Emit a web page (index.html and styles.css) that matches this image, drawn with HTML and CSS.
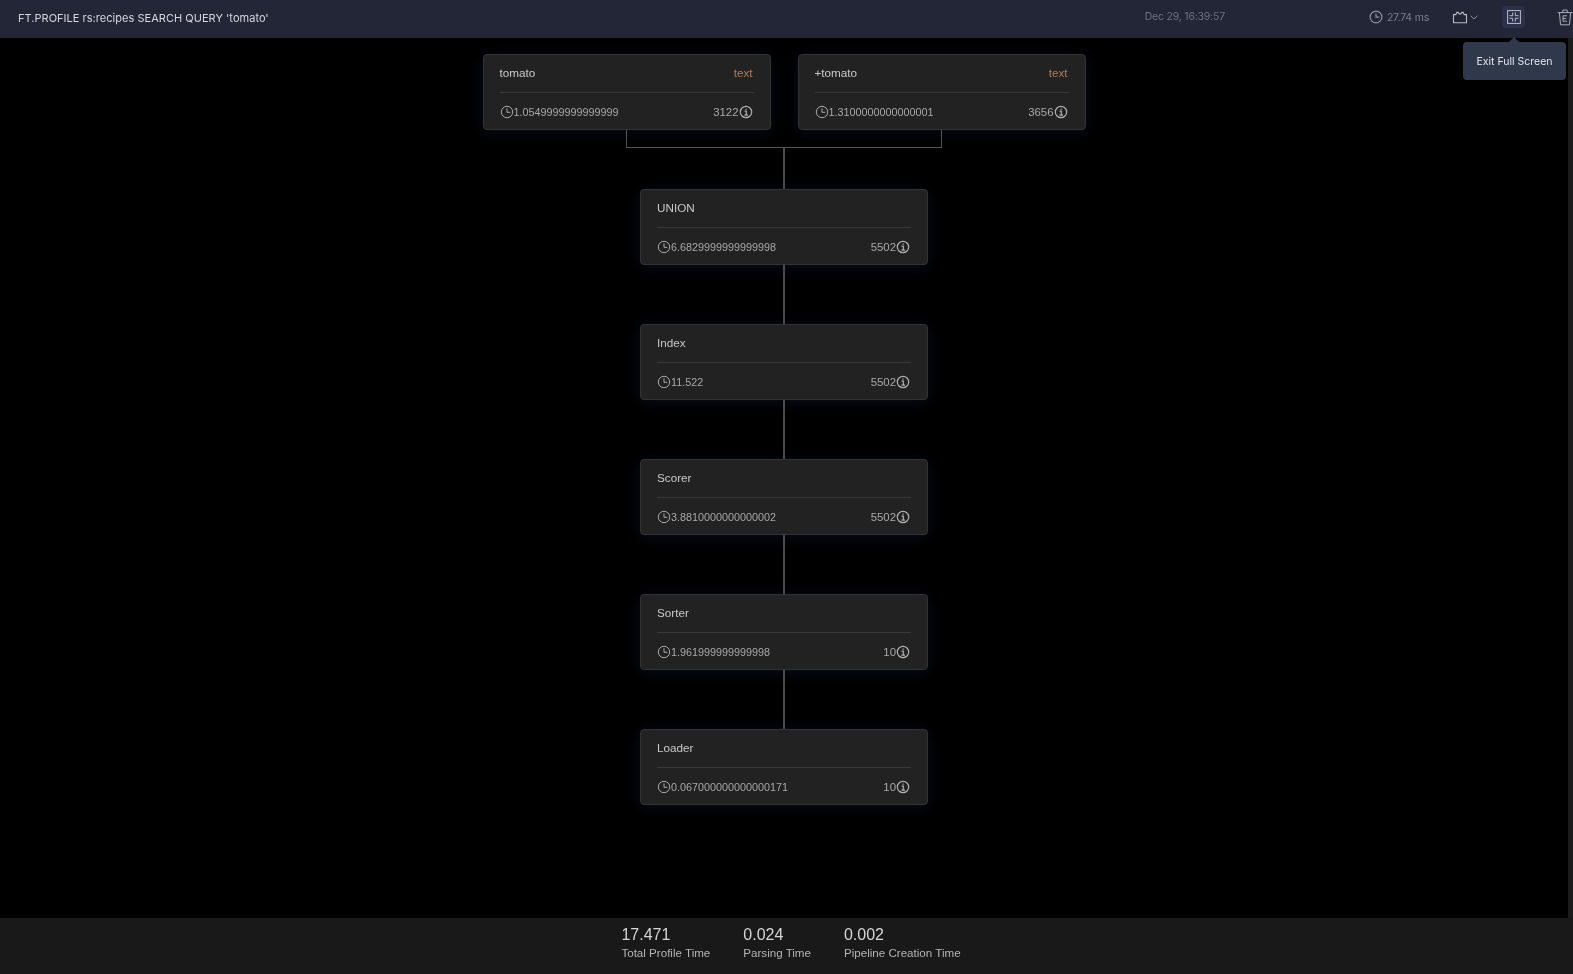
FILE: index.html
```html
<!DOCTYPE html>
<html lang="en">
<head>
<meta charset="utf-8">
<title>FT.PROFILE</title>
<link rel="stylesheet" href="styles.css">
</head>
<body>
<div class="app">
  <header class="topbar">
    <div class="query">FT.PROFILE rs:recipes SEARCH QUERY 'tomato'</div>
    <div class="date">Dec 29, 16:39:57</div>
    <div class="duration">
      <svg class="ico-clock" viewBox="0 0 14 14"><circle cx="7" cy="7" r="5.9"/><path d="M7 3.4V7.2H10.4"/></svg>
      <span>27.74 ms</span>
    </div>
    <div class="view-switch">
      <svg class="ico-view" viewBox="0 0 16 13"><path d="M1.5 3.6H3.8L4.8 1.4H6.2L7 2.9H9L9.8 1.4H11.2L12.2 3.6H14.5V11.8H1.5Z"/></svg>
      <svg class="ico-chev" viewBox="0 0 8 5"><path d="M.7.8 4 4 7.300.8"/></svg>
    </div>
    <div class="icon-btn">
      <svg class="ico-exit" viewBox="0 0 14 14"><rect x=".6" y=".6" width="12.800" height="12.800"/><path d="M5.700 2.500V5.700H2.500M8.300 2.500V5.700H11.500M5.700 11.500V8.300H2.500M8.300 11.500V8.300H11.500"/></svg>
    </div>
    <svg class="ico-trash" viewBox="0 0 16 17"><path d="M.6 3.600H15.400M5.500 3.600 6 1H10L10.500 3.600M2.400 3.600 3.500 15.800H12.500L13.600 3.600M6 6.800H10M6 9.500H9M6 12.200H10M6 6.800V12.200"/></svg>
  </header>

  <div class="tooltip">Exit Full Screen</div>

  <div class="workspace">
    <main class="tree">
      <div class="pair">
        <article class="node">
          <div class="node-head"><span>tomato</span><span class="tag">text</span></div>
          <div class="node-meta">
            <span class="meta-time"><svg class="ico-time" viewBox="0 0 14 14"><circle cx="7" cy="7" r="5.700"/><path d="M7 3.300V7.300H10.300"/></svg>1.0549999999999999</span>
            <span class="meta-count">3122<svg class="ico-info" viewBox="0 0 14 14"><circle cx="7" cy="7" r="5.700"/><path d="M5.600 6.100H7.300V10.200M5.400 10.200H9M7.100 3.600V4.800"/></svg></span>
          </div>
        </article>
        <article class="node">
          <div class="node-head"><span>+tomato</span><span class="tag">text</span></div>
          <div class="node-meta">
            <span class="meta-time"><svg class="ico-time" viewBox="0 0 14 14"><circle cx="7" cy="7" r="5.700"/><path d="M7 3.300V7.300H10.300"/></svg>1.3100000000000001</span>
            <span class="meta-count">3656<svg class="ico-info" viewBox="0 0 14 14"><circle cx="7" cy="7" r="5.700"/><path d="M5.600 6.100H7.300V10.200M5.400 10.200H9M7.100 3.600V4.800"/></svg></span>
          </div>
        </article>
      </div>
      <div class="bracket"></div>
      <div class="stem stem-top"></div>

      <article class="node">
        <div class="node-head"><span>UNION</span></div>
        <div class="node-meta">
          <span class="meta-time"><svg class="ico-time" viewBox="0 0 14 14"><circle cx="7" cy="7" r="5.700"/><path d="M7 3.300V7.300H10.300"/></svg>6.6829999999999998</span>
          <span class="meta-count">5502<svg class="ico-info" viewBox="0 0 14 14"><circle cx="7" cy="7" r="5.700"/><path d="M5.600 6.100H7.300V10.200M5.400 10.200H9M7.100 3.600V4.800"/></svg></span>
        </div>
      </article>
      <div class="stem"></div>

      <article class="node">
        <div class="node-head"><span>Index</span></div>
        <div class="node-meta">
          <span class="meta-time"><svg class="ico-time" viewBox="0 0 14 14"><circle cx="7" cy="7" r="5.700"/><path d="M7 3.300V7.300H10.300"/></svg>11.522</span>
          <span class="meta-count">5502<svg class="ico-info" viewBox="0 0 14 14"><circle cx="7" cy="7" r="5.700"/><path d="M5.600 6.100H7.300V10.200M5.400 10.200H9M7.100 3.600V4.800"/></svg></span>
        </div>
      </article>
      <div class="stem"></div>

      <article class="node">
        <div class="node-head"><span>Scorer</span></div>
        <div class="node-meta">
          <span class="meta-time"><svg class="ico-time" viewBox="0 0 14 14"><circle cx="7" cy="7" r="5.700"/><path d="M7 3.300V7.300H10.300"/></svg>3.8810000000000002</span>
          <span class="meta-count">5502<svg class="ico-info" viewBox="0 0 14 14"><circle cx="7" cy="7" r="5.700"/><path d="M5.600 6.100H7.300V10.200M5.400 10.200H9M7.100 3.600V4.800"/></svg></span>
        </div>
      </article>
      <div class="stem"></div>

      <article class="node">
        <div class="node-head"><span>Sorter</span></div>
        <div class="node-meta">
          <span class="meta-time"><svg class="ico-time" viewBox="0 0 14 14"><circle cx="7" cy="7" r="5.700"/><path d="M7 3.300V7.300H10.300"/></svg>1.961999999999998</span>
          <span class="meta-count">10<svg class="ico-info" viewBox="0 0 14 14"><circle cx="7" cy="7" r="5.700"/><path d="M5.600 6.100H7.300V10.200M5.400 10.200H9M7.100 3.600V4.800"/></svg></span>
        </div>
      </article>
      <div class="stem"></div>

      <article class="node">
        <div class="node-head"><span>Loader</span></div>
        <div class="node-meta">
          <span class="meta-time"><svg class="ico-time" viewBox="0 0 14 14"><circle cx="7" cy="7" r="5.700"/><path d="M7 3.300V7.300H10.300"/></svg>0.067000000000000171</span>
          <span class="meta-count">10<svg class="ico-info" viewBox="0 0 14 14"><circle cx="7" cy="7" r="5.700"/><path d="M5.600 6.100H7.300V10.200M5.400 10.200H9M7.100 3.600V4.800"/></svg></span>
        </div>
      </article>
    </main>
    <div class="scrollbar"></div>
  </div>

  <footer class="summary">
    <div class="stat"><div class="stat-value">17.471</div><div class="stat-label">Total Profile Time</div></div>
    <div class="stat"><div class="stat-value">0.024</div><div class="stat-label">Parsing Time</div></div>
    <div class="stat"><div class="stat-value">0.002</div><div class="stat-label">Pipeline Creation Time</div></div>
  </footer>
</div>
</body>
</html>
```
FILE: styles.css
```css
* { box-sizing: border-box; }
html, body { margin: 0; height: 100%; background: #000; overflow: hidden; }
body { font-family: "Liberation Sans", Arial, sans-serif; }
svg { display: block; fill: none; stroke: currentColor; }

.app { position: relative; display: flex; flex-direction: column; height: 974px; width: 1573px; overflow: hidden; will-change: transform; }

.topbar {
  flex: none; height: 38px; display: flex; align-items: center;
  background: #232637; font-family: Inter, sans-serif; overflow: hidden;
}
.query { padding-left: 18px; padding-bottom: 3px; font-size: 11px; letter-spacing: .03px; color: #d5d7dd; }
.date { margin-left: auto; font-size: 10.500px; color: #6c7080; letter-spacing: -0.2px; margin-top: -6px; }
.duration { display: flex; align-items: center; gap: 4px; margin: -4px 0 0 144px; font-size: 10.500px; color: #7a7e8c; letter-spacing: -0.2px; }
.ico-clock { width: 14px; height: 14px; color: #8e919f; stroke-width: 1.2; }
.view-switch { display: flex; align-items: center; gap: 2px; margin: -4px 0 0 23px; color: #b6bac4; }
.ico-view { width: 16px; height: 13px; stroke-width: 1.100; }
.ico-chev { width: 8px; height: 5px; stroke-width: 1; color: #8e919f; }
.icon-btn {
  display: flex; align-items: center; justify-content: center;
  width: 23px; height: 22px; margin: -4px 0 0 24px; border-radius: 4px;
  background: #2c3149; color: #b9bdca;
}
.ico-exit { width: 14px; height: 14px; stroke-width: 1; }
.ico-trash { flex: none; width: 16px; height: 17px; margin: -4px 0 0 32px; color: #a9adb8; stroke-width: 1; }

.tooltip {
  position: absolute; top: 42px; left: 1463px; width: 103px; height: 38px;
  display: flex; align-items: center; justify-content: center;
  background: #2f394b; border-radius: 4px;
  font-family: Inter, sans-serif; font-size: 10.500px; color: #e4e6ea; z-index: 2;
}
.tooltip::before {
  content: ""; position: absolute; top: -5px; left: 46px;
  border: 5px solid transparent; border-top: 0; border-bottom-color: #2f394b;
}

.workspace { flex: 1; min-height: 0; display: flex; }
.tree { flex: 1; display: flex; flex-direction: column; align-items: center; padding-top: 16px; }
.scrollbar { flex: none; width: 5px; background: #1b1b1b; }

.pair { display: flex; gap: 27px; }
.node {
  width: 288px; height: 76px; padding: 0 16px;
  background: #222; border: 1px solid #333; border-radius: 4px;
  box-shadow: 0 2px 14px rgba(50, 90, 170, .16);
}
.node-head {
  display: flex; justify-content: space-between; align-items: center;
  height: 38px; padding-bottom: 2px; border-bottom: 1px solid #383838;
  font-size: 11.700px; color: #c9c9c9;
}
.tag { color: #b37d4e; padding-right: 1px; }
.node-meta {
  display: flex; justify-content: space-between; align-items: center;
  height: 37px; font-size: 10.800px; color: #a8a8a8;
}
.meta-time, .meta-count { display: flex; align-items: center; }
.meta-count { padding-right: 1px; font-size: 11.400px; }
.ico-time { width: 14px; height: 14px; stroke-width: 1; color: #a8a8a8; }
.ico-info { width: 14px; height: 14px; stroke-width: 1.200; color: #b0b0b0; }

.bracket { width: 316px; height: 18px; margin-right: 1px; border: 1px solid #555; border-top: 0; }
.stem { width: 2px; height: 59px; background: #4a4a4a; }
.stem-top { height: 41px; }

.summary {
  flex: none; height: 56px; display: flex; justify-content: center; gap: 33px;
  padding-top: 7px; padding-left: 9px; background: #191919;
}
.stat-value { font-size: 16px; line-height: 20px; color: #d6d6d6; }
.stat-label { font-size: 11.600px; line-height: 16px; color: #b4b4b4; }
```
